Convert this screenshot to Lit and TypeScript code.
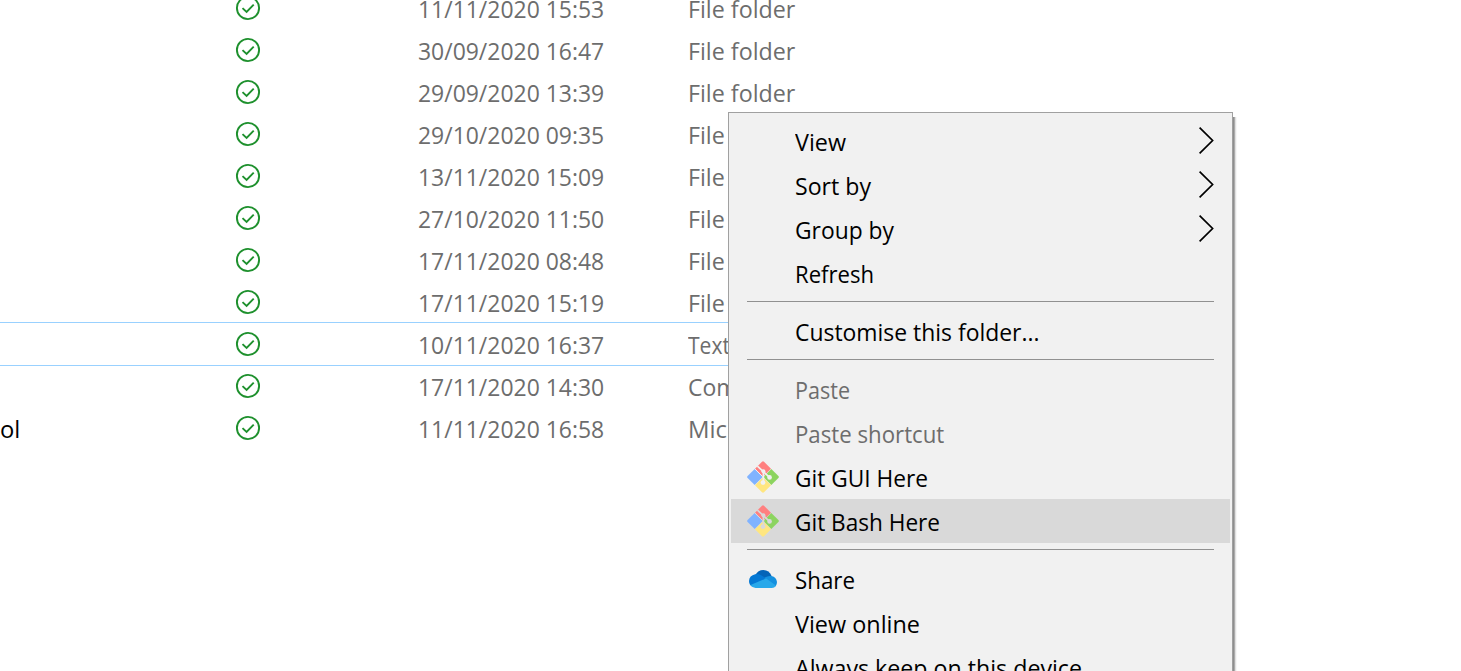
import { LitElement, html, css, svg, nothing } from "lit";
import { customElement, property } from "lit/decorators.js";

/** A single line of text condensed or widened to a given width. */
@customElement("fit-text")
class FitText extends LitElement {
  @property() text = "";
  @property({ type: Number }) width = 0;
  static styles = css`
    :host { display: block; white-space: nowrap; }
    .line { display: inline-block; transform-origin: 0 50%; white-space: pre; }
  `;
  updated() {
    const el = this.renderRoot.querySelector(".line") as HTMLElement;
    el.style.transform = "none";
    const natural = el.getBoundingClientRect().width;
    if (this.width && natural) el.style.transform = `scaleX(${this.width / natural})`;
  }
  render() {
    return html`<span class="line">${this.text}</span>`;
  }
}

const rows: [string, string, number, string?][] = [
  ["11/11/2020 15:53", "File folder", 107.3],
  ["30/09/2020 16:47", "File folder", 107.3],
  ["29/09/2020 13:39", "File folder", 107.3],
  ["29/10/2020 09:35", "File folder", 107.3],
  ["13/11/2020 15:09", "File folder", 107.3],
  ["27/10/2020 11:50", "File folder", 107.3],
  ["17/11/2020 08:48", "File folder", 107.3],
  ["17/11/2020 15:19", "File folder", 107.3],
  ["10/11/2020 16:37", "Text", 42],
  ["17/11/2020 14:30", "Com", 49.5],
  ["11/11/2020 16:58", "Mic", 39, "ol"],
];

type Item = { label: string; width: number; sub?: boolean; off?: boolean; hot?: boolean; icon?: "git" | "cloud" } | null;
const items: Item[] = [
  { label: "View", width: 51, sub: true },
  { label: "Sort by", width: 76, sub: true },
  { label: "Group by", width: 99, sub: true },
  { label: "Refresh", width: 79 },
  null,
  { label: "Customise this folder...", width: 244.5 },
  null,
  { label: "Paste", width: 55, off: true },
  { label: "Paste shortcut", width: 149.3, off: true },
  { label: "Git GUI Here", width: 133, icon: "git" },
  { label: "Git Bash Here", width: 145, icon: "git", hot: true },
  null,
  { label: "Share", width: 60, icon: "cloud" },
  { label: "View online", width: 125 },
  { label: "Always keep on this device", width: 287 },
];

const check = html`<svg class="check" width="26" height="26" viewBox="0 0 26 26" fill="none" stroke="#1e902d">
  <circle cx="13" cy="13" r="11.1" stroke-width="1.9" />
  <path d="M7.5 13.1L11.6 16.9L18.7 9.6" stroke-width="1.9" />
</svg>`;

const git = (bg: string) => svg`<svg width="32" height="32" viewBox="0 0 32 32">
  <path d="M15 .7Q16 -.2 17 .7L24 7.7L16 15.7L8 7.7Z" fill="#ff8080"/>
  <path d="M7.7 8L15.7 16L7.7 24L.6 17Q-.3 16 .6 15Z" fill="#80b3ff"/>
  <path d="M24.3 8L31.4 15Q32.3 16 31.4 17L24.3 24L16.3 16Z" fill="#8cd45f"/>
  <path d="M16 16.3L24 24.3L17 31.3Q16 32.2 15 31.3L8 24.3Z" fill="#ffe680"/>
  <g fill="none" stroke=${bg} stroke-width="1.7">
    <path d="M10.4 5.1L16.4 10.6V21"/><path d="M16.4 10.6L22.4 16.4"/><path d="M7.9 7.9L15.5 15.5" stroke-width="1"/>
  </g>
  <g fill=${bg}><circle cx="16.4" cy="10.2" r="2"/><circle cx="22.6" cy="16.4" r="2.3"/><circle cx="16" cy="21.6" r="2.4"/></g>
</svg>`;

const cloud = svg`<svg width="32" height="32" viewBox="0 0 32 32">
  <path d="M8.2 11.2Q11 6 16.3 6Q22.3 6 24.6 12L16 17Z" fill="#0464b8"/>
  <path d="M8.2 10.2Q11 9.5 13.7 11.1L21 15.4L5 22.5Q2 20.5 2 17Q2.3 11.5 8.2 10.2Z" fill="#0478d4"/>
  <path d="M17.8 13.5Q21 11.4 24.6 12.1Q29.3 13 30 18Q30 20.5 28.6 22.5L17 17Z" fill="#1490df"/>
  <path d="M19.2 14.4L28.9 21.5Q27.6 24 24.8 24H8.5Q5.2 24 3.5 21.1Z" fill="#28a8ea"/>
</svg>`;

@customElement("app-root")
class AppRoot extends LitElement {
  static styles = css`
    :host {
      display: block; position: relative; width: 1461px; height: 671px; overflow: hidden;
      background: #fff; font: 23.5px/42px "Open Sans", "Noto Sans", sans-serif; color: #000;
    }
    .list { margin-top: -13px; width: 1000px; }
    .row {
      display: grid; grid-template-columns: 235px 182px 271px 1fr;
      height: 42px; color: #6d6d6d;
    }
    .row.focus { box-shadow: 0 -1px #99d1ff, 0 1px #99d1ff; }
    .row fit-text { padding-top: 1px; }
    .name { color: #000; }
    .check { margin-top: 8px; display: block; }
    .date { padding-left: 1px; }
    .menu {
      position: absolute; left: 728px; top: 112px; width: 503px; height: 600px;
      padding-top: 6px; border: 1px solid #a0a0a0; background: #f1f1f1;
    }
    .shade {
      position: absolute; left: 1233px; top: 117px; width: 4px; height: 554px;
      background: linear-gradient(90deg, #8e8e8e 0 1px, #ababab 1px 2px, #e0e0e0 2px 3px, #f7f7f7 3px);
    }
    .item {
      display: grid; grid-template-columns: 32px 1fr 16px; column-gap: 16px;
      height: 44px; line-height: 44px; margin: 0 2px; padding: 0 16px;
    }
    .item fit-text { padding-top: 1px; }
    .item.hot { background: #d9d9d9; }
    .item.off { color: #6d6d6d; }
    .icon svg { display: block; margin-top: 6px; }
    .icon.cloud svg { margin-top: 7px; }
    .arrow { display: block; margin-top: 6px; }
    .sep { height: 1px; margin: 6px 18px 7px; background: #919191; }
  `;
  render() {
    return html`
      <div class="list">
        ${rows.map(([date, kind, w, name], i) => html`
          <div class="row ${i === 8 ? "focus" : ""}">
            <fit-text class="name" .text=${name ?? ""} .width=${name ? 20.3 : 0}></fit-text>
            ${check}
            <fit-text class="date" .text=${date} .width=${186.2}></fit-text>
            <fit-text .text=${kind} .width=${w}></fit-text>
          </div>`)}
      </div>
      <div class="shade"></div>
      <div class="menu">
        ${items.map((m) => m === null ? html`<div class="sep"></div>` : html`
          <div class="item ${m.hot ? "hot" : ""} ${m.off ? "off" : ""}">
            <div class="icon ${m.icon ?? ""}">${m.icon === "git" ? git(m.hot ? "#d9d9d9" : "#f1f1f1") : m.icon ? cloud : nothing}</div>
            <fit-text .text=${m.label} .width=${m.width}></fit-text>
            ${m.sub ? html`<svg class="arrow" width="16" height="30" viewBox="0 0 16 30" fill="none" stroke="#000" stroke-width="1.7"><path d="M1.6 2.6L14.6 15.5L1.6 28.4"/></svg>` : nothing}
          </div>`)}
      </div>`;
  }
}
